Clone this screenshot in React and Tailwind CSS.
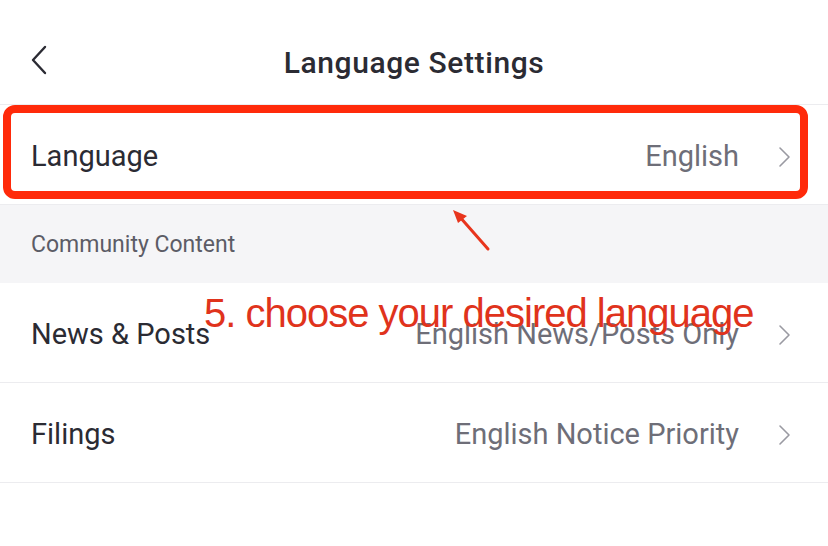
const Chevron = () => (
  <svg width="14" height="22" viewBox="0 0 14 22" fill="none">
    <path d="M3 2 L12 11 L3 20" stroke="#9a9aa2" strokeWidth="1.6" strokeLinecap="round" strokeLinejoin="round" />
  </svg>
);

const Row = ({ label, value }) => (
  <div className="flex h-[100px] items-center justify-between border-b border-[#ececef] pl-[31px] pr-[37px] pt-[4px]">
    <span className="text-[29px] text-[#2b2b33]">{label}</span>
    <div className="flex items-center gap-[38px]">
      <span className="text-[29px] text-[#6e6e78]">{value}</span>
      <Chevron />
    </div>
  </div>
);

export default function App() {
  return (
    <div className="relative h-[546px] w-[828px] overflow-hidden bg-white" style={{ fontFamily: 'Roboto, "Noto Sans", sans-serif' }}>
      {/* header */}
      <div className="relative flex h-[105px] items-center justify-center border-b border-[#ececef]">
        <svg className="absolute left-[28px] top-[44px]" width="22" height="32" viewBox="0 0 22 32" fill="none">
          <path d="M17 3 L5 16 L17 29" stroke="#2b2b33" strokeWidth="2.4" strokeLinecap="round" strokeLinejoin="round" />
        </svg>
        <h1 className="mt-[20px] text-[30px] font-medium text-[#2b2b33] tracking-[0.6px]">Language Settings</h1>
      </div>

      <Row label="Language" value="English" />

      <div className="flex h-[78px] items-center bg-[#f5f5f7] pl-[31px] pt-[3px]">
        <span className="text-[23px] text-[#5c5c66]">Community Content</span>
      </div>

      <Row label="News & Posts" value="English News/Posts Only" />
      <Row label="Filings" value="English Notice Priority" />

      {/* annotation overlay */}
      <div className="absolute left-[3px] top-[105px] h-[94px] w-[805px] rounded-[12px] border-[8px] border-[#ff2a0a]" />
      <svg className="absolute left-[445px] top-[205px]" width="50" height="50" viewBox="0 0 50 50">
        <path d="M43 44 L14 11" stroke="#e8351d" strokeWidth="3" strokeLinecap="round" />
        <path d="M8 5 L22 11 L13 18 Z" fill="#e8351d" />
      </svg>
      <div
        className="absolute left-[204px] top-[293px] text-[40px] leading-none text-[#e0331c] tracking-[-1px]"
        style={{ fontFamily: '"Liberation Sans", sans-serif' }}
      >
        5. choose your desired language
      </div>
    </div>
  );
}
